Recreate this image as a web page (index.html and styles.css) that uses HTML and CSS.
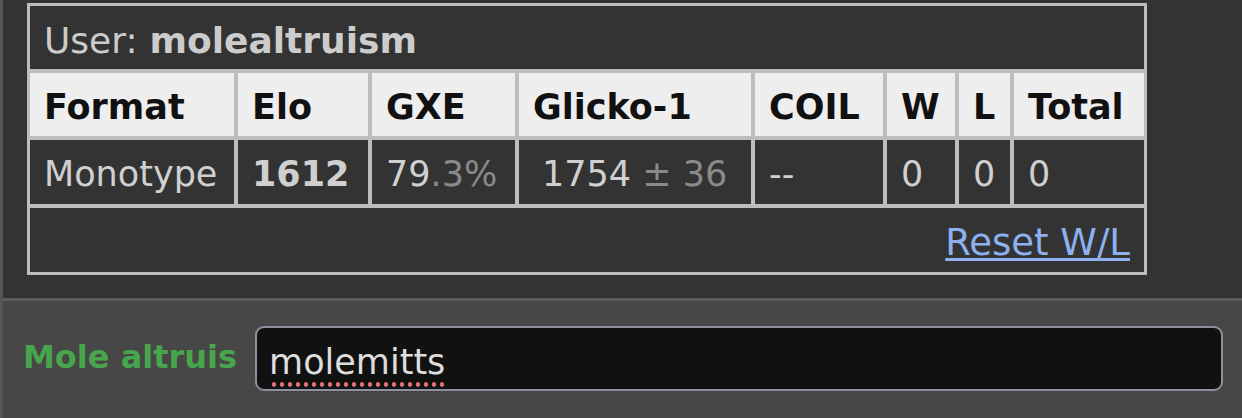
FILE: index.html
```html
<!DOCTYPE html>
<html>
<head>
<meta charset="utf-8">
<link rel="stylesheet" href="styles.css">
</head>
<body>
<div class="page">
  <div class="top">
    <div class="ladder">
      <div class="title">User: <strong>molealtruism</strong></div>
      <div class="th">Format</div>
      <div class="th">Elo</div>
      <div class="th">GXE</div>
      <div class="th">Glicko-1</div>
      <div class="th">COIL</div>
      <div class="th">W</div>
      <div class="th">L</div>
      <div class="th">Total</div>
      <div class="td">Monotype</div>
      <div class="td"><strong>1612</strong></div>
      <div class="td">79<small>.3%</small></div>
      <div class="td glicko">1754<small> ± 36</small></div>
      <div class="td">--</div>
      <div class="td">0</div>
      <div class="td">0</div>
      <div class="td">0</div>
      <div class="foot"><a href="#" class="reset">Reset W/L</a></div>
    </div>
  </div>
  <div class="bottom">
    <label class="name">Mole altruis</label>
    <div class="input"><span class="typed">molemitts</span></div>
  </div>
</div>
</body>
</html>
```

FILE: styles.css
```css
html, body {
  margin: 0;
  padding: 0;
}
body {
  background: #333333;
  font-family: "DejaVu Sans", Verdana, sans-serif;
  width: 1242px;
  height: 418px;
  overflow: hidden;
}
.page {
  border-left: 3px solid #555555;
  height: 418px;
  box-sizing: border-box;
}
.top {
  height: 298px;
  box-sizing: border-box;
  padding: 3px 0 0 24px;
}
.ladder {
  display: grid;
  grid-template-columns: 204px 130px 143px 232px 128px 68px 51px 130px;
  grid-template-rows: 63px 63px 64px 64px;
  gap: 4px;
  width: max-content;
  background: #bdbdbd;
  border: 3px solid #bdbdbd;
}
.title {
  grid-column: 1 / -1;
  background: #333333;
  color: #cccccc;
  font-size: 36px;
  padding: 5px 14px 0;
  display: flex;
  align-items: center;
}
.title strong {
  font-weight: bold;
  margin-left: 0.33em;
}
.th {
  background: #eeeeee;
  color: #111111;
  font-weight: bold;
  font-size: 35px;
  padding: 5px 14px 0;
  display: flex;
  align-items: center;
}
.td {
  background: #333333;
  color: #d0d0d0;
  font-size: 35px;
  padding: 4px 14px 0;
  display: flex;
  align-items: center;
  white-space: pre;
}
.td small {
  font-size: inherit;
  color: #8a8a8a;
}
.td.glicko {
  padding-left: 23px;
}
.foot {
  grid-column: 1 / -1;
  background: #333333;
  display: flex;
  justify-content: flex-end;
  align-items: center;
  padding: 4px 14px 0 0;
}
.reset {
  color: #8db0ee;
  font-size: 37px;
  text-decoration: underline;
  text-decoration-thickness: 3px;
  text-underline-offset: 3px;
}
.bottom {
  height: 120px;
  box-sizing: border-box;
  background: #474747;
  border-top: 3px solid #5a5a5a;
  display: flex;
  align-items: center;
  padding: 0 0 0 20px;
  gap: 18px;
}
.name {
  color: #47a54b;
  font-weight: bold;
  font-size: 32px;
  margin-top: -6px;
}
.input {
  width: 968px;
  height: 65px;
  box-sizing: border-box;
  background: #111111;
  border: 2px solid #8a909c;
  border-radius: 9px;
  display: flex;
  align-items: center;
  padding: 6px 0 0 12px;
  margin-top: -2px;
}
.typed {
  color: #dddddd;
  font-size: 35px;
  position: relative;
}
.typed::after {
  content: "";
  position: absolute;
  left: 1px;
  right: -2px;
  bottom: -5px;
  height: 5px;
  background-image: radial-gradient(circle, #de7272 2px, transparent 2.6px);
  background-size: 8px 5px;
  background-repeat: repeat-x;
}
```
